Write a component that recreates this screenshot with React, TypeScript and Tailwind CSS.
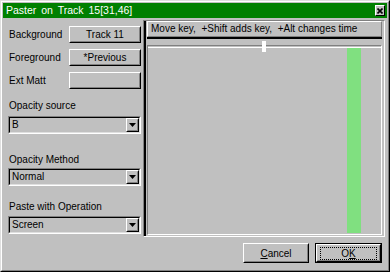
import React from 'react'

const font = { fontFamily: '"Liberation Sans", Arial, sans-serif' }

// raised Win95-style button
function RaisedButton({ children, className = '' }: { children?: React.ReactNode; className?: string }) {
  return (
    <div className={`border border-t-white border-l-white border-r-black border-b-black ${className}`}>
      <div className="flex h-full w-full items-center justify-center border border-t-[#c0c0c0] border-l-[#c0c0c0] border-r-[#808080] border-b-[#808080]">
        {children}
      </div>
    </div>
  )
}

function ComboBox({ value }: { value: string }) {
  return (
    <div className="h-[18px] w-[133px] border border-t-[#808080] border-l-[#808080] border-r-white border-b-white">
      <div className="flex h-full w-full items-stretch border border-t-black border-l-black border-r-[#dfdfdf] border-b-[#dfdfdf]">
        <div className="flex-1 pl-[2px] text-[10px] leading-[14px] text-black">{value}</div>
        <RaisedButton className="h-full w-[13px]">
          <svg width="7" height="4" viewBox="0 0 7 4">
            <polygon points="0,0 7,0 3.5,4" fill="#000" />
          </svg>
        </RaisedButton>
      </div>
    </div>
  )
}

function SourceRow({ label, value }: { label: string; value: string }) {
  return (
    <div className="flex h-[17px] items-center justify-between">
      <span className="pl-[1px] text-[10px] text-black">{label}</span>
      <RaisedButton className="h-[17px] w-[72px]">
        <span className="text-[10px] text-black">{value}</span>
      </RaisedButton>
    </div>
  )
}

export default function App() {
  return (
    <div
      className="h-[272px] w-[390px] border border-t-[#dfdfdf] border-l-[#dfdfdf] border-r-black border-b-black bg-[#c0c0c0]"
      style={font}>
      <div className="flex h-full flex-col border border-t-white border-l-white border-r-[#808080] border-b-[#808080] px-[1px] pt-[1px]">
        {/* title bar */}
        <div className="flex h-[15px] items-center justify-between bg-[#008000] pl-[3px] pr-[2px]">
          <span className="text-[10.5px] leading-[15px] text-white [word-spacing:2px]">Paster on Track 15[31,46]</span>
          <div className="flex h-[11px] w-[10px] items-center justify-center border border-t-white border-l-white border-r-black border-b-black bg-[#c0c0c0]">
            <svg width="6" height="6" viewBox="0 0 6 6">
              <path d="M0.5 0.5 L5.5 5.5 M5.5 0.5 L0.5 5.5" stroke="#000" strokeWidth="1.6" />
            </svg>
          </div>
        </div>

        <div className="flex">
          {/* left column */}
          <div className="ml-[5px] flex w-[133px] flex-col">
            <div className="mt-[8px] flex flex-col gap-[6px]">
              <SourceRow label="Background" value="Track 11" />
              <SourceRow label="Foreground" value="*Previous" />
              <SourceRow label="Ext Matt" value="" />
            </div>
            <div className="mt-[11px] h-[12px] pl-[1px] text-[10px] leading-[12px] text-black">Opacity source</div>
            <div className="mt-[4px]">
              <ComboBox value="B" />
            </div>
            <div className="mt-[20px] h-[12px] pl-[1px] text-[10px] leading-[12px] text-black">Opacity Method</div>
            <div className="mt-[2px]">
              <ComboBox value="Normal" />
            </div>
            <div className="mt-[15px] h-[12px] pl-[1px] text-[10px] leading-[12px] text-black">Paste with Operation</div>
            <div className="mt-[3px]">
              <ComboBox value="Screen" />
            </div>
          </div>

          {/* key panel */}
          <div className="mt-[2px] ml-[2px] h-[217px] w-[242px] border border-t-[#808080] border-l-[#808080] border-r-white border-b-white">
            <div className="flex h-full flex-col border-l-[2px] border-l-black pl-[1px] pr-[2px]">
              <div className="h-[16px] border border-t-white border-l-white border-r-[#808080] border-b-[#808080] pl-[3px] text-[10px] leading-[14px] text-black">
                Move key,&nbsp; +Shift adds key,&nbsp; +Alt changes time
              </div>
              <div className="h-[2px] bg-black" />
              <div className="relative mt-[6px] mb-[1px] flex flex-1 flex-col border border-t-[#808080] border-l-[#808080] border-r-white border-b-white">
                <div className="mt-[1px] h-[1px] bg-white" />
                <div className="absolute top-[-5px] left-[114px] h-[11px] w-[4px] bg-white" />
                <div className="flex flex-1 justify-end pr-[20px]">
                  <div className="mb-[1px] w-[14px] bg-[#80e080]" />
                </div>
              </div>
            </div>
          </div>
        </div>

        {/* dialog buttons */}
        <div className="mt-[6px] flex justify-end gap-[6px] pr-[5px]">
          <RaisedButton className="h-[20px] w-[66px]">
            <span className="text-[10px] text-black">
              <u>C</u>ancel
            </span>
          </RaisedButton>
          <div className="h-[20px] w-[67px] border border-black">
            <RaisedButton className="h-full w-full">
              <span className="border border-dotted border-black px-[20px] text-[10px] leading-[11px] text-black">
                O<u>K</u>
              </span>
            </RaisedButton>
          </div>
        </div>
      </div>
    </div>
  )
}
